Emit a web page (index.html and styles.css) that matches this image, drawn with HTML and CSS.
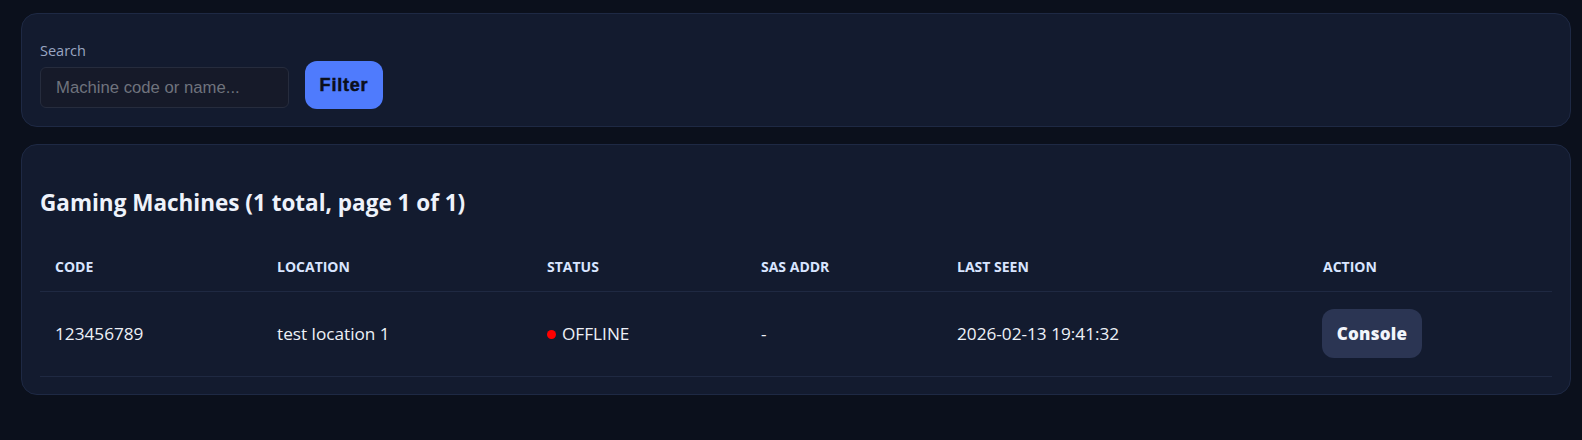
FILE: index.html
```html
<!DOCTYPE html>
<html>
<head>
<meta charset="utf-8">
<link rel="stylesheet" href="styles.css">
</head>
<body>
<div class="page">
  <section class="card filter-card">
    <form class="filter-form">
      <div class="field">
        <label class="field-label">Search</label>
        <input class="field-input" type="text" placeholder="Machine code or name...">
      </div>
      <button class="btn btn-primary" type="button">Filter</button>
    </form>
  </section>
  <section class="card list-card">
    <h2 class="list-title">Gaming Machines (1 total, page 1 of 1)</h2>
    <table class="machines">
      <colgroup>
        <col class="c-code"><col class="c-loc"><col class="c-status"><col class="c-sas"><col class="c-seen"><col>
      </colgroup>
      <thead>
        <tr><th>Code</th><th>Location</th><th>Status</th><th>SAS Addr</th><th>Last Seen</th><th>Action</th></tr>
      </thead>
      <tbody>
        <tr>
          <td>123456789</td>
          <td>test location 1</td>
          <td><span class="dot"></span>OFFLINE</td>
          <td>-</td>
          <td>2026-02-13 19:41:32</td>
          <td><button class="btn btn-secondary" type="button">Console</button></td>
        </tr>
      </tbody>
    </table>
  </section>
</div>
</body>
</html>
```
FILE: styles.css
```css
html, body {
  margin: 0;
  padding: 0;
  background: #0b101c;
  height: 100%;
}
body {
  font-family: "Open Sans", "Noto Sans", sans-serif;
  color: #e5e9f2;
}
.page {
  padding: 13px 11px 0 21px;
  display: flex;
  flex-direction: column;
  gap: 17px;
}
.card {
  background: #131b2f;
  border: 1px solid #1e2944;
  border-radius: 16px;
}
.filter-card {
  padding: 27px 18px 18px;
}
.filter-form {
  display: flex;
  align-items: flex-end;
  gap: 16px;
}
.field {
  display: flex;
  flex-direction: column;
}
.field-label {
  font-size: 14.5px;
  line-height: 20px;
  color: #9aa6c2;
  margin-bottom: 6px;
}
.field-input {
  box-sizing: border-box;
  width: 249px;
  height: 41px;
  background: #161a29;
  border: 1px solid #262c3d;
  border-radius: 6px;
  padding: 0 15px;
  font-family: "Liberation Sans", Arial, sans-serif;
  font-size: 16.7px;
  color: #e5e9f2;
  outline: none;
}
.field-input::placeholder {
  color: #6f737d;
}
.btn {
  border: none;
  border-radius: 12px;
  cursor: pointer;
  padding: 0;
}
.btn-primary {
  width: 78px;
  height: 48px;
  margin-bottom: -1px;
  background: #4f7bfd;
  color: #0b0f1a;
  font-family: "Liberation Sans", Arial, sans-serif;
  font-weight: 700;
  font-size: 18px;
  letter-spacing: 0.8px;
  -webkit-text-stroke: 0.5px #0b0f1a;
}
.btn-secondary {
  width: 100px;
  height: 49px;
  background: #2b3553;
  color: #f2f5fb;
  font-family: "Open Sans", sans-serif;
  font-weight: 800;
  font-size: 17px;
  letter-spacing: 0.2px;
}
.list-card {
  padding: 27px 18px 17px;
}
.list-title {
  margin: 16px 0 25px;
  font-size: 22.5px;
  line-height: 30px;
  font-weight: 700;
  color: #eef2fb;
}
.machines {
  width: 100%;
  border-collapse: collapse;
  table-layout: fixed;
}
.c-code { width: 222px; }
.c-loc { width: 270px; }
.c-status { width: 214px; }
.c-sas { width: 196px; }
.c-seen { width: 366px; }
.machines th {
  text-align: left;
  font-size: 14px;
  font-weight: 700;
  text-transform: uppercase;
  color: #d9e5ff;
  padding: 14px 15px 14px;
  line-height: 20px;
  border-bottom: 1px solid #1f2942;
}
.machines td {
  font-size: 17.2px;
  line-height: 22px;
  padding: 17px 15px 18px;
  height: 49px;
  border-bottom: 1px solid #1f2942;
  color: #eef1f7;
}
.machines td:last-child {
  padding-left: 14px;
}
.dot {
  display: inline-block;
  width: 9px;
  height: 9px;
  border-radius: 50%;
  background: #ff0000;
  margin-right: 6px;
  vertical-align: 1px;
}
```
